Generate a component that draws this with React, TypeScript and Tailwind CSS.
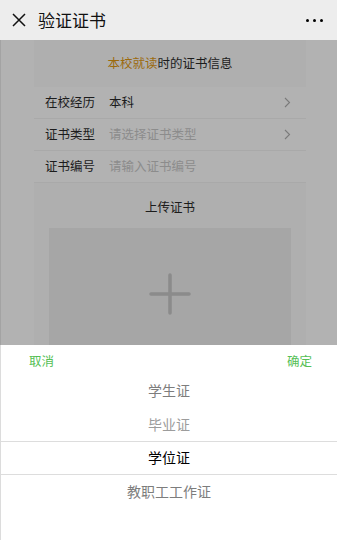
const font = { fontFamily: '"Noto Sans CJK SC", "Noto Sans", sans-serif' }

function Chevron() {
  return (
    <svg width="7" height="11" viewBox="0 0 7 11" className="mr-[1px]">
      <path d="M1 1l4.5 4.5L1 10" fill="none" stroke="#7a7a7a" strokeWidth="1.1" />
    </svg>
  )
}

function Row({ label, value, placeholder, arrow }: { label: string; value: string; placeholder?: boolean; arrow?: boolean }) {
  return (
    <div className="flex items-center h-[32px] border-b border-[#a9a9a9] pl-[11px] pr-[14px]">
      <div className="w-[64px] text-[12.5px] text-[#1c1c1c]">{label}</div>
      <div className={`flex-1 text-[12.5px] ${placeholder ? 'text-[#8c8c8c]' : 'text-[#1c1c1c]'}`}>{value}</div>
      {arrow && <Chevron />}
    </div>
  )
}

export default function App() {
  const items = [
    { t: '学生证', c: 'text-[#7d7d7d]' },
    { t: '毕业证', c: 'text-[#9c9c9c]' },
    { t: '学位证', c: 'text-black', sel: true },
    { t: '教职工工作证', c: 'text-[#7d7d7d]' },
  ]

  return (
    <div className="relative w-[337px] h-[540px] overflow-hidden bg-[#b2b2b2]" style={font}>
      {/* 导航栏 */}
      <div className="h-[40px] bg-[#ededed] flex items-center pl-[12px] pr-[11px]">
        <svg width="14" height="14" viewBox="0 0 14 14">
          <path d="M1 1l12 12M13 1L1 13" stroke="#111" strokeWidth="1.5" />
        </svg>
        <div className="ml-[12px] text-[17px] text-[#111]">验证证书</div>
        <div className="ml-auto flex gap-[4px] mr-[3px]">
          <span className="w-[3px] h-[3px] rounded-full bg-black" />
          <span className="w-[3px] h-[3px] rounded-full bg-black" />
          <span className="w-[3px] h-[3px] rounded-full bg-black" />
        </div>
      </div>

      <div className="border-l border-[#a3a3a3] h-[500px]">
        <div className="ml-[33px] mr-[31px]">
          <div className="h-[47px] bg-[#afafaf] flex items-center justify-center text-[12.5px] text-[#1c1c1c]">
            <span className="text-[#9c6a0c]">本校就读</span>时的证书信息
          </div>
          <Row label="在校经历" value="本科" arrow />
          <Row label="证书类型" value="请选择证书类型" placeholder arrow />
          <Row label="证书编号" value="请输入证书编号" placeholder />
          <div className="bg-[#afafaf] h-[200px] pt-[15px] px-[15px]">
            <div className="text-center text-[12.5px] text-[#1c1c1c]">上传证书</div>
            <div className="mt-[11px] h-[150px] bg-[#a6a6a6] flex items-center justify-center pb-[17px]">
              <svg width="42" height="42" viewBox="0 0 42 42">
                <path d="M21 2v38M2 21h38" stroke="#8b8b8b" strokeWidth="3.5" strokeLinecap="round" />
              </svg>
            </div>
          </div>
        </div>
      </div>

      {/* 选择器 */}
      <div className="absolute left-0 right-0 bottom-0 h-[195px] bg-white border-l border-[#dcdcdc]">
        <div className="flex justify-between items-center h-[29px] pl-[28px] pr-[25px] pt-[3px] text-[12.5px] text-[#55c055]">
          <span>取消</span>
          <span>确定</span>
        </div>
        <div className="flex flex-col">
          {items.map((it) => (
            <div
              key={it.t}
              className={`h-[33.5px] flex items-center justify-center text-[14px] ${it.c} ${it.sel ? 'border-y border-[#dddddd]' : ''}`}
            >
              {it.t}
            </div>
          ))}
        </div>
      </div>
    </div>
  )
}
